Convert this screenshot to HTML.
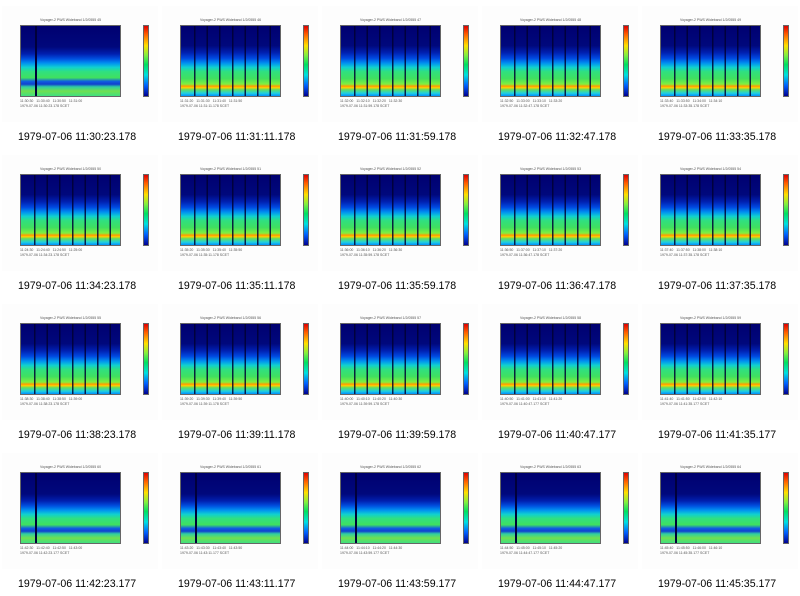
<!DOCTYPE html>
<html><head><meta charset="utf-8"><style>
body{margin:0;width:800px;height:596px;background:#fff;position:relative;overflow:hidden;font-family:"Liberation Sans",sans-serif}
.c{position:absolute;width:160px;height:149px}
.bg{position:absolute;left:2px;top:6px;width:156px;height:116px;background:#fdfdfd}
.t{position:absolute;left:20px;top:18px;width:101px;text-align:center;font-size:3.5px;color:#555}
.p{position:absolute;left:20px;top:25px;width:101px;height:72px;border:1px solid #666;box-sizing:border-box;
background:linear-gradient(180deg,#000070 0%,#00087c 28%,#0020b0 38%,#0048e0 46%,#0090f0 53%,#10d0d0 59%,#30e080 65%,#40e060 75%,#80f040 83%,#ff9a00 86%,#ffd000 88%,#60e060 91%,#20d0e0 96%,#0090ff 100%)}
.p.a{background:linear-gradient(180deg,#000070 0%,#00087c 30%,#0020b0 40%,#0050e0 47%,#0090f0 53%,#10d0d0 59%,#30e080 65%,#40e060 74%,#1060e0 79%,#1040d0 83%,#30d0a0 87%,#70e050 93%,#40e080 100%)}
.p.b::after{content:"";position:absolute;left:13px;top:0;width:78px;height:100%;
background:repeating-linear-gradient(90deg,rgba(0,0,50,.85) 0 1.5px,transparent 1.5px 12.6px)}
.p.a::after{content:"";position:absolute;left:14px;top:0;width:2px;height:100%;background:#00003a}
.x{position:absolute;left:20px;top:99px;width:110px;font-size:3.5px;color:#555;line-height:5px}
.cb{position:absolute;left:143px;top:25px;width:6px;height:72px;border:1px solid #666;box-sizing:border-box;
background:linear-gradient(180deg,#e00000,#ff6000 12%,#ffe000 28%,#80f040 42%,#00e060 55%,#00e0e0 70%,#0060ff 85%,#000090)}
.cap{position:absolute;left:18px;top:131px;font-size:10.6px;color:#000;white-space:nowrap}
</style></head><body>

<div class="c" style="left:0;top:0"><div class="bg"></div><div class="t">Voyager-2 PWS Wideband 1/2/0555 45</div><div class="p a"></div><div class="x">11:30:30 &nbsp; 11:30:40 &nbsp; 11:30:50 &nbsp; 11:31:00<br>1979-07-06 11:30:23.178 SCET</div><div class="cb"></div><div class="cap">1979-07-06 11:30:23.178</div></div>
<div class="c" style="left:160px;top:0"><div class="bg"></div><div class="t">Voyager-2 PWS Wideband 1/2/0555 46</div><div class="p b"></div><div class="x">11:31:20 &nbsp; 11:31:30 &nbsp; 11:31:40 &nbsp; 11:31:50<br>1979-07-06 11:31:11.178 SCET</div><div class="cb"></div><div class="cap">1979-07-06 11:31:11.178</div></div>
<div class="c" style="left:320px;top:0"><div class="bg"></div><div class="t">Voyager-2 PWS Wideband 1/2/0555 47</div><div class="p b"></div><div class="x">11:32:00 &nbsp; 11:32:10 &nbsp; 11:32:20 &nbsp; 11:32:30<br>1979-07-06 11:31:59.178 SCET</div><div class="cb"></div><div class="cap">1979-07-06 11:31:59.178</div></div>
<div class="c" style="left:480px;top:0"><div class="bg"></div><div class="t">Voyager-2 PWS Wideband 1/2/0555 48</div><div class="p b"></div><div class="x">11:32:50 &nbsp; 11:33:00 &nbsp; 11:33:10 &nbsp; 11:33:20<br>1979-07-06 11:32:47.178 SCET</div><div class="cb"></div><div class="cap">1979-07-06 11:32:47.178</div></div>
<div class="c" style="left:640px;top:0"><div class="bg"></div><div class="t">Voyager-2 PWS Wideband 1/2/0555 49</div><div class="p b"></div><div class="x">11:33:40 &nbsp; 11:33:50 &nbsp; 11:34:00 &nbsp; 11:34:10<br>1979-07-06 11:33:35.178 SCET</div><div class="cb"></div><div class="cap">1979-07-06 11:33:35.178</div></div>

<div class="c" style="left:0;top:149px"><div class="bg"></div><div class="t">Voyager-2 PWS Wideband 1/2/0555 50</div><div class="p b"></div><div class="x">11:24:30 &nbsp; 11:24:40 &nbsp; 11:24:50 &nbsp; 11:25:00<br>1979-07-06 11:34:23.178 SCET</div><div class="cb"></div><div class="cap">1979-07-06 11:34:23.178</div></div>
<div class="c" style="left:160px;top:149px"><div class="bg"></div><div class="t">Voyager-2 PWS Wideband 1/2/0555 51</div><div class="p b"></div><div class="x">11:35:20 &nbsp; 11:35:30 &nbsp; 11:35:40 &nbsp; 11:35:50<br>1979-07-06 11:35:11.178 SCET</div><div class="cb"></div><div class="cap">1979-07-06 11:35:11.178</div></div>
<div class="c" style="left:320px;top:149px"><div class="bg"></div><div class="t">Voyager-2 PWS Wideband 1/2/0555 52</div><div class="p b"></div><div class="x">11:36:00 &nbsp; 11:36:10 &nbsp; 11:36:20 &nbsp; 11:36:30<br>1979-07-06 11:35:59.178 SCET</div><div class="cb"></div><div class="cap">1979-07-06 11:35:59.178</div></div>
<div class="c" style="left:480px;top:149px"><div class="bg"></div><div class="t">Voyager-2 PWS Wideband 1/2/0555 53</div><div class="p b"></div><div class="x">11:36:50 &nbsp; 11:37:00 &nbsp; 11:37:10 &nbsp; 11:37:20<br>1979-07-06 11:36:47.178 SCET</div><div class="cb"></div><div class="cap">1979-07-06 11:36:47.178</div></div>
<div class="c" style="left:640px;top:149px"><div class="bg"></div><div class="t">Voyager-2 PWS Wideband 1/2/0555 54</div><div class="p b"></div><div class="x">11:37:40 &nbsp; 11:37:50 &nbsp; 11:38:00 &nbsp; 11:38:10<br>1979-07-06 11:37:35.178 SCET</div><div class="cb"></div><div class="cap">1979-07-06 11:37:35.178</div></div>

<div class="c" style="left:0;top:298px"><div class="bg"></div><div class="t">Voyager-2 PWS Wideband 1/2/0555 55</div><div class="p b"></div><div class="x">11:38:30 &nbsp; 11:38:40 &nbsp; 11:38:50 &nbsp; 11:39:00<br>1979-07-06 11:38:23.178 SCET</div><div class="cb"></div><div class="cap">1979-07-06 11:38:23.178</div></div>
<div class="c" style="left:160px;top:298px"><div class="bg"></div><div class="t">Voyager-2 PWS Wideband 1/2/0555 56</div><div class="p b"></div><div class="x">11:39:20 &nbsp; 11:39:30 &nbsp; 11:39:40 &nbsp; 11:39:50<br>1979-07-06 11:39:11.178 SCET</div><div class="cb"></div><div class="cap">1979-07-06 11:39:11.178</div></div>
<div class="c" style="left:320px;top:298px"><div class="bg"></div><div class="t">Voyager-2 PWS Wideband 1/2/0555 57</div><div class="p b"></div><div class="x">11:40:00 &nbsp; 11:40:10 &nbsp; 11:40:20 &nbsp; 11:40:30<br>1979-07-06 11:39:59.178 SCET</div><div class="cb"></div><div class="cap">1979-07-06 11:39:59.178</div></div>
<div class="c" style="left:480px;top:298px"><div class="bg"></div><div class="t">Voyager-2 PWS Wideband 1/2/0555 58</div><div class="p b"></div><div class="x">11:40:50 &nbsp; 11:41:00 &nbsp; 11:41:10 &nbsp; 11:41:20<br>1979-07-06 11:40:47.177 SCET</div><div class="cb"></div><div class="cap">1979-07-06 11:40:47.177</div></div>
<div class="c" style="left:640px;top:298px"><div class="bg"></div><div class="t">Voyager-2 PWS Wideband 1/2/0555 59</div><div class="p b"></div><div class="x">11:41:40 &nbsp; 11:41:50 &nbsp; 11:42:00 &nbsp; 11:42:10<br>1979-07-06 11:41:35.177 SCET</div><div class="cb"></div><div class="cap">1979-07-06 11:41:35.177</div></div>

<div class="c" style="left:0;top:447px"><div class="bg"></div><div class="t">Voyager-2 PWS Wideband 1/2/0555 60</div><div class="p a"></div><div class="x">11:42:30 &nbsp; 11:42:40 &nbsp; 11:42:50 &nbsp; 11:43:00<br>1979-07-06 11:42:23.177 SCET</div><div class="cb"></div><div class="cap">1979-07-06 11:42:23.177</div></div>
<div class="c" style="left:160px;top:447px"><div class="bg"></div><div class="t">Voyager-2 PWS Wideband 1/2/0555 61</div><div class="p a"></div><div class="x">11:43:20 &nbsp; 11:43:30 &nbsp; 11:43:40 &nbsp; 11:43:50<br>1979-07-06 11:43:11.177 SCET</div><div class="cb"></div><div class="cap">1979-07-06 11:43:11.177</div></div>
<div class="c" style="left:320px;top:447px"><div class="bg"></div><div class="t">Voyager-2 PWS Wideband 1/2/0555 62</div><div class="p a"></div><div class="x">11:44:00 &nbsp; 11:44:10 &nbsp; 11:44:20 &nbsp; 11:44:30<br>1979-07-06 11:43:59.177 SCET</div><div class="cb"></div><div class="cap">1979-07-06 11:43:59.177</div></div>
<div class="c" style="left:480px;top:447px"><div class="bg"></div><div class="t">Voyager-2 PWS Wideband 1/2/0555 63</div><div class="p a"></div><div class="x">11:44:50 &nbsp; 11:45:00 &nbsp; 11:45:10 &nbsp; 11:45:20<br>1979-07-06 11:44:47.177 SCET</div><div class="cb"></div><div class="cap">1979-07-06 11:44:47.177</div></div>
<div class="c" style="left:640px;top:447px"><div class="bg"></div><div class="t">Voyager-2 PWS Wideband 1/2/0555 64</div><div class="p a"></div><div class="x">11:45:40 &nbsp; 11:45:50 &nbsp; 11:46:00 &nbsp; 11:46:10<br>1979-07-06 11:45:35.177 SCET</div><div class="cb"></div><div class="cap">1979-07-06 11:45:35.177</div></div>

</body></html>
